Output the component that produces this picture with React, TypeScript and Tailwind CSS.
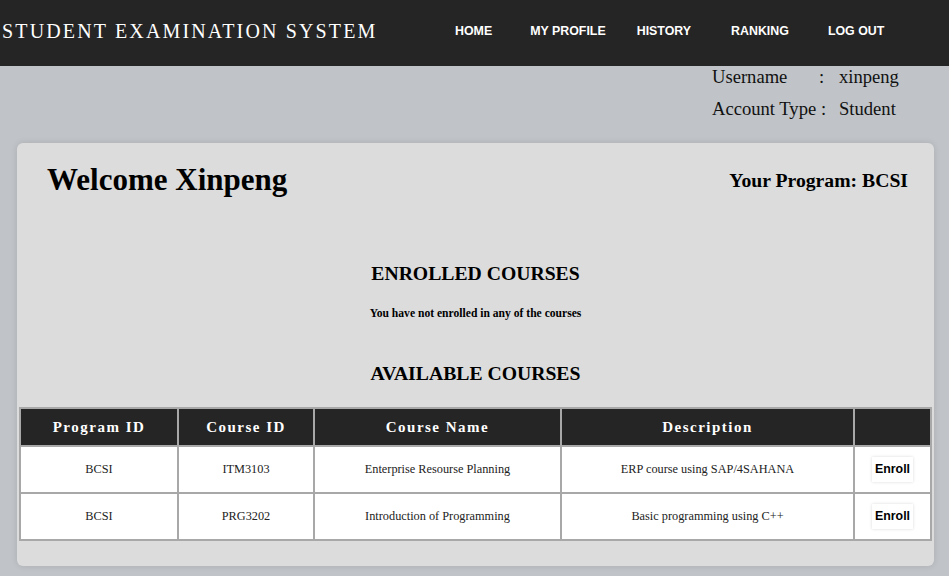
import React from "react";

const serif = { fontFamily: '"Liberation Serif", "Times New Roman", serif' };

const courses = [
  { program: "BCSI", id: "ITM3103", name: "Enterprise Resourse Planning", desc: "ERP course using SAP/4SAHANA" },
  { program: "BCSI", id: "PRG3202", name: "Introduction of Programming", desc: "Basic programming using C++" },
];

export default function App() {
  return (
    <div className="min-h-[576px] w-[949px] bg-[#c0c4c8] overflow-hidden" style={serif}>
      <header className="h-[66px] bg-[#252525] flex items-center">
        <div className="pl-[2px] w-[455px] text-white text-[20px] tracking-[2.15px] leading-none pb-[4px] whitespace-nowrap">
          STUDENT EXAMINATION SYSTEM
        </div>
        <nav className="flex items-center text-white text-[12.4px] font-bold pb-[4px] whitespace-nowrap [font-family:'Liberation_Sans',Arial,sans-serif]">
          <span>HOME</span>
          <span className="ml-[38px]">MY PROFILE</span>
          <span className="ml-[31px]">HISTORY</span>
          <span className="ml-[40px]">RANKING</span>
          <span className="ml-[39px]">LOG OUT</span>
        </nav>
      </header>

      <div className="flex justify-end pr-[40px]">
        <div className="grid grid-cols-[107px_20px_auto] gap-y-[10px] text-[18.6px] text-[#111] leading-[22px] w-[197px] whitespace-nowrap">
          <span>Username</span>
          <span>:</span>
          <span>xinpeng</span>
          <span>Account Type</span>
          <span className="pl-[2px]">:</span>
          <span>Student</span>
        </div>
      </div>

      <main className="mx-[17px] mt-[23px] w-[917px] h-[423px] bg-[#dcdcdc] rounded-[6px] shadow-[0_0_6px_rgba(0,0,0,0.12)] pt-[16px]">
        <div className="flex items-center justify-between pl-[30px] pr-[26px]">
          <h1 className="text-[31px] font-bold text-black leading-[42px]">Welcome Xinpeng</h1>
          <h3 className="text-[19.7px] font-bold text-black pt-[2px]">Your Program: BCSI</h3>
        </div>

        <div className="flex flex-col items-center text-black">
          <h2 className="mt-[59px] text-[19.7px] font-bold leading-[26px]">ENROLLED COURSES</h2>
          <h6 className="mt-[21px] text-[11.6px] font-bold leading-[14px]">You have not enrolled in any of the courses</h6>
          <h2 className="mt-[39px] text-[19.7px] font-bold leading-[26px]">AVAILABLE COURSES</h2>
        </div>

        <div className="pl-[2px] mt-[21px]">
          <table className="w-[911px] border-collapse border-2 border-[#a8a8a8] table-fixed">
            <colgroup>
              <col className="w-[158px]" />
              <col className="w-[136px]" />
              <col className="w-[247px]" />
              <col className="w-[293px]" />
              <col className="w-[77px]" />
            </colgroup>
            <thead>
              <tr className="h-[38px] bg-[#252525] text-white">
                {["Program ID", "Course ID", "Course Name", "Description", ""].map((h, i) => (
                  <th key={i} className="border-2 border-[#a8a8a8] text-[15px] font-bold tracking-[1.5px] text-center">
                    {h}
                  </th>
                ))}
              </tr>
            </thead>
            <tbody>
              {courses.map((c) => (
                <tr key={c.id} className="h-[47px] bg-white text-[12.3px] text-[#222]">
                  <td className="border-2 border-[#a8a8a8] text-center">{c.program}</td>
                  <td className="border-2 border-[#a8a8a8] text-center">{c.id}</td>
                  <td className="border-2 border-[#a8a8a8] text-center">{c.name}</td>
                  <td className="border-2 border-[#a8a8a8] text-center">{c.desc}</td>
                  <td className="border-2 border-[#a8a8a8] text-center">
                    <button className="bg-white px-[3px] h-[25px] text-[12.4px] font-bold text-black shadow-[0_0_3px_rgba(0,0,0,0.15)] [font-family:'Liberation_Sans',Arial,sans-serif]">
                      Enroll
                    </button>
                  </td>
                </tr>
              ))}
            </tbody>
          </table>
        </div>
      </main>
    </div>
  );
}
